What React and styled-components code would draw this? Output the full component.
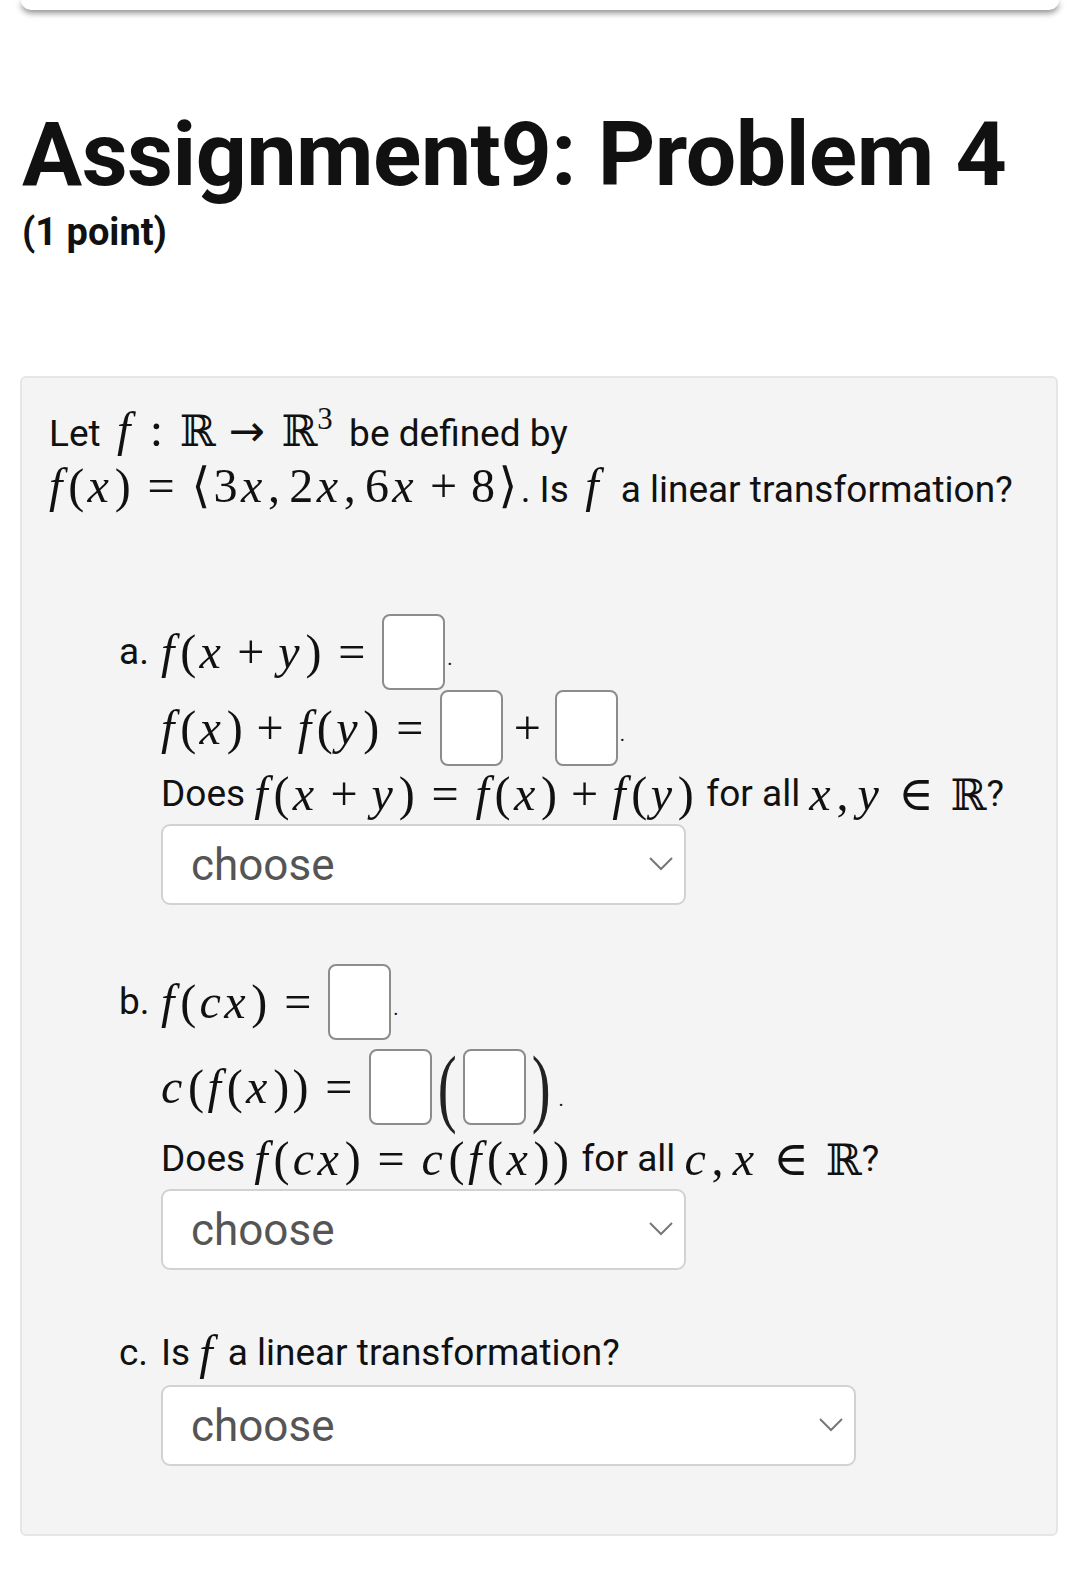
import React from 'react';
import styled, { createGlobalStyle } from 'styled-components';

const GlobalStyle = createGlobalStyle`
  body {
    margin: 0;
    background: #fff;
    font-family: Roboto, 'Liberation Sans', sans-serif;
    color: #111;
  }
`;

const TopCard = styled.div`
  height: 10px;
  margin: 0 21px;
  background: #fff;
  border-radius: 0 0 12px 12px;
  box-shadow: 0 3px 6px rgba(0, 0, 0, 0.45);
`;

const Header = styled.header`
  padding: 96px 22px 0;
`;

const Title = styled.h1`
  margin: 0;
  font-size: 89.5px;
  font-weight: 700;
  line-height: 1.1;
  letter-spacing: -0.5px;
`;

const Points = styled.div`
  font-size: 38px;
  font-weight: 700;
  margin-top: 6px;
`;

const Problem = styled.section`
  margin: 122px 22px 40px 20px;
  padding: 26px 27px 68px;
  background: #f4f4f4;
  border: 2px solid #e6e6e6;
  border-radius: 6px;
  font-size: 37px;
  line-height: 56px;
`;

const Para = styled.p`
  margin: 0;
`;

const Parts = styled.ol`
  list-style: none;
  margin: 96px 0 0;
  padding: 0 0 0 70px;
`;

const Part = styled.li`
  display: grid;
  grid-template-columns: 42px auto;
  align-items: start;
  margin-bottom: ${p => p.$gap || 0}px;
`;

const Marker = styled.span`
  display: flex;
  align-items: center;
  min-height: ${p => p.$h || 56}px;
`;

const Body = styled.div`
  display: flex;
  flex-direction: column;
  align-items: flex-start;
`;

const Line = styled.div`
  display: flex;
  align-items: center;
  min-height: ${p => p.$h || 56}px;
  margin-bottom: ${p => p.$mb || 0}px;
  white-space: nowrap;
`;

const M = styled.span`
  font-family: 'Liberation Serif', 'DejaVu Serif', serif;
  font-size: 1.3em;
  line-height: 1;
  letter-spacing: 0.07em;
  margin: 0 ${p => p.$pad ?? 0.15}em;
`;

const V = styled.i`
  font-style: italic;
  padding-right: 0.05em;
`;

const Op = styled.span`
  margin: 0 0.22em;
`;

const Rel = styled.span`
  margin: 0 0.28em;
`;

const Sep = styled.span`
  margin-right: 0.12em;
`;

const Bb = styled.span`
  font-family: 'DejaVu Serif', serif;
  font-size: 0.9em;
  letter-spacing: 0;
`;

const Arrow = styled.span`
  font-family: 'DejaVu Sans', sans-serif;
  font-size: 0.9em;
  margin: 0 0.3em;
`;

const Sup = styled.sup`
  font-size: 0.64em;
  letter-spacing: 0;
`;

const Blank = styled.span`
  display: inline-block;
  width: 59px;
  height: 72px;
  background: #fff;
  border: 2px solid #8c8c8c;
  border-radius: 8px;
`;

const Dot = styled.span`
  align-self: flex-end;
  margin: 0 0 22px 2px;
  font-size: 20px;
  line-height: 1;
`;

const BigParen = styled.span`
  font-family: 'Liberation Serif', 'DejaVu Serif', serif;
  font-size: 86px;
  line-height: 1;
  transform: scaleX(0.66);
  margin: 0 1px;
  color: #222;
`;

const SelectWrap = styled.div`
  position: relative;
  width: ${p => p.$w}px;
  margin-top: ${p => p.$mt || 0}px;
`;

const Select = styled.select`
  appearance: none;
  width: 100%;
  height: 81px;
  padding: 0 28px;
  background: #fff;
  border: 2px solid #d2d2d2;
  border-radius: 9px;
  font-family: Roboto, 'Liberation Sans', sans-serif;
  font-size: 44px;
  color: #555;
`;

const Chevron = styled.svg`
  position: absolute;
  right: 12px;
  top: 32px;
  pointer-events: none;
`;

const ChooseBox = ({ width, mt }) => (
  <SelectWrap $w={width} $mt={mt}>
    <Select defaultValue="">
      <option value="">choose</option>
      <option value="yes">yes</option>
      <option value="no">no</option>
    </Select>
    <Chevron width="26" height="16" viewBox="0 0 26 16">
      <path d="M2 2 L13 13 L24 2" fill="none" stroke="#777" strokeWidth="2" />
    </Chevron>
  </SelectWrap>
);

const R = () => <Bb>ℝ</Bb>;

export default function App() {
  return (
    <>
      <GlobalStyle />
      <TopCard />
      <Header>
        <Title>Assignment9: Problem 4</Title>
        <Points>(1 point)</Points>
      </Header>
      <Problem>
        <Para>
          Let <M><V>f</V><Rel>:</Rel><R /><Arrow>→</Arrow><R /><Sup>3</Sup></M> be defined by
        </Para>
        <Para>
          <M $pad={0}>
            <V>f</V>(<V>x</V>)<Rel>=</Rel>⟨3<V>x</V>,<Sep />2<V>x</V>,<Sep />6<V>x</V><Op>+</Op>8⟩
          </M>
          . Is <M><V>f</V></M> a linear transformation?
        </Para>

        <Parts>
          <Part $gap={59}>
            <Marker $h={75}>a.</Marker>
            <Body>
              <Line $h={75}>
                <M $pad={0}><V>f</V>(<V>x</V><Op>+</Op><V>y</V>)<Rel>=</Rel></M>
                <Blank />
                <Dot>.</Dot>
              </Line>
              <Line $h={75}>
                <M $pad={0}><V>f</V>(<V>x</V>)<Op>+</Op><V>f</V>(<V>y</V>)<Rel>=</Rel></M>
                <Blank />
                <M $pad={0}><Op>+</Op></M>
                <Blank />
                <Dot>.</Dot>
              </Line>
              <Line>
                Does&nbsp;
                <M $pad={0}><V>f</V>(<V>x</V><Op>+</Op><V>y</V>)<Rel>=</Rel><V>f</V>(<V>x</V>)<Op>+</Op><V>f</V>(<V>y</V>)</M>
                &nbsp;for all&nbsp;
                <M $pad={0}><V>x</V>,<Sep /><V>y</V><Rel>∈</Rel><R /></M>?
              </Line>
              <ChooseBox width={525} mt={2} />
            </Body>
          </Part>

          <Part $gap={55}>
            <Marker $h={75}>b.</Marker>
            <Body>
              <Line $h={75} $mb={3}>
                <M $pad={0}><V>f</V>(<V>cx</V>)<Rel>=</Rel></M>
                <Blank />
                <Dot>.</Dot>
              </Line>
              <Line $h={88}>
                <M $pad={0}><V>c</V>(<V>f</V>(<V>x</V>))<Rel>=</Rel></M>
                <Blank />
                <BigParen>(</BigParen>
                <Blank />
                <BigParen>)</BigParen>
                <Dot>.</Dot>
              </Line>
              <Line>
                Does&nbsp;
                <M $pad={0}><V>f</V>(<V>cx</V>)<Rel>=</Rel><V>c</V>(<V>f</V>(<V>x</V>))</M>
                &nbsp;for all&nbsp;
                <M $pad={0}><V>c</V>,<Sep /><V>x</V><Rel>∈</Rel><R /></M>?
              </Line>
              <ChooseBox width={525} mt={2} />
            </Body>
          </Part>

          <Part>
            <Marker>c.</Marker>
            <Body>
              <Line>
                Is&nbsp;<M $pad={0}><V>f</V></M>&nbsp;a linear transformation?
              </Line>
              <ChooseBox width={695} mt={4} />
            </Body>
          </Part>
        </Parts>
      </Problem>
    </>
  );
}
